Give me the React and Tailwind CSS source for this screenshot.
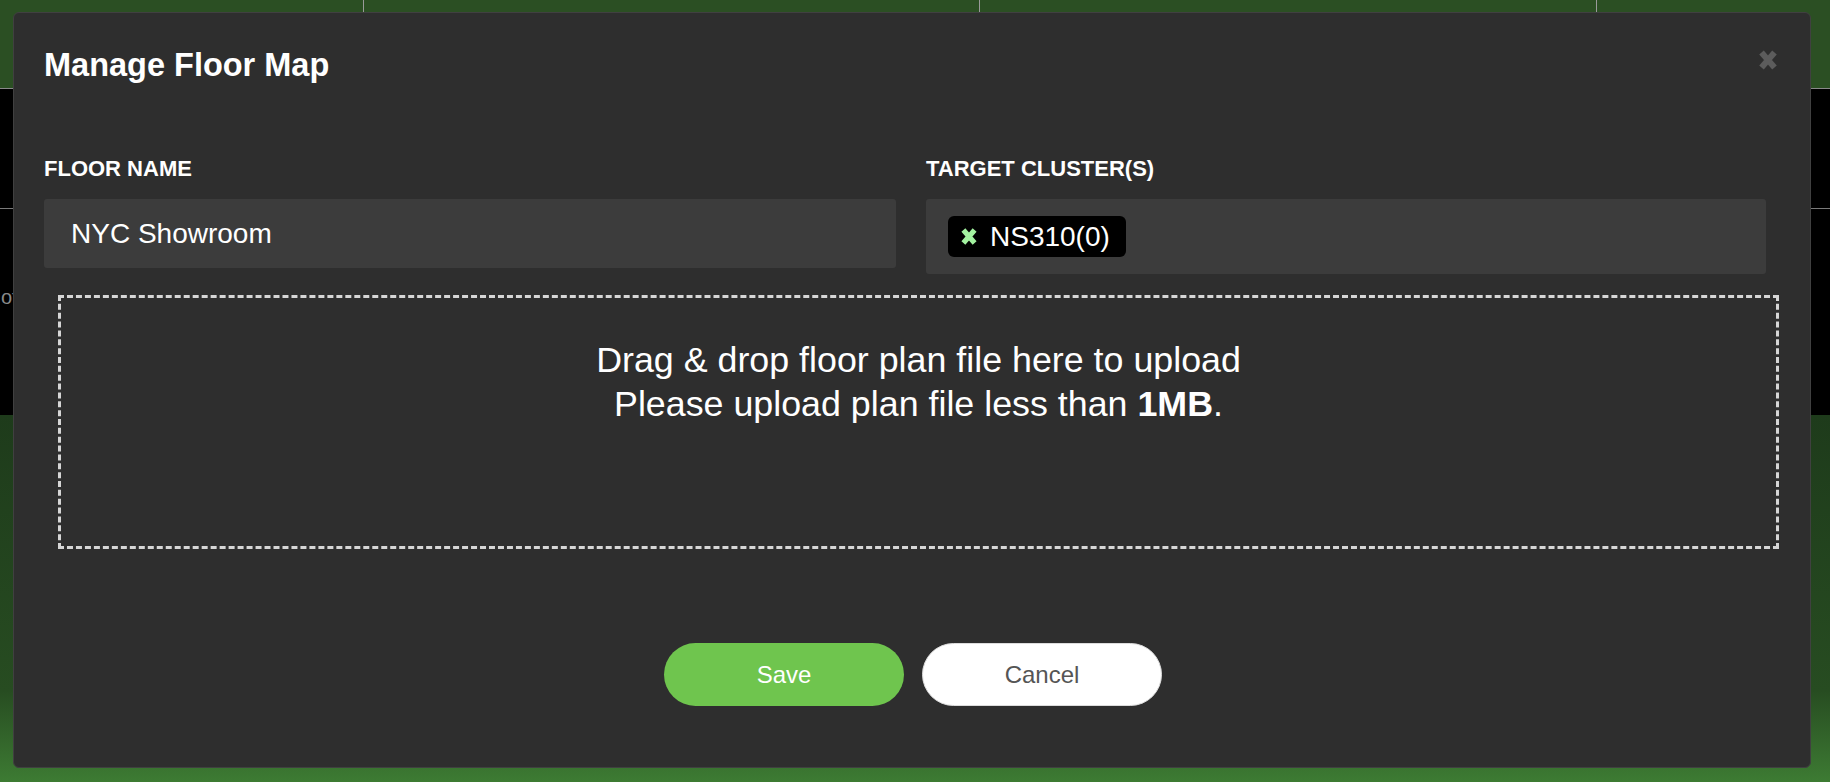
import React from "react";

function HeavyX({ className, color, sw }) {
  return (
    <svg viewBox="0 0 20 22" className={className} fill="none">
      <path d="M3.5 3.5 L16.5 18.5 M16.5 3.5 L3.5 18.5" stroke={color} strokeWidth={sw} strokeLinecap="butt" />
    </svg>
  );
}

export default function App() {
  return (
    <div className="relative w-[1830px] h-[782px] overflow-hidden bg-black font-['Liberation_Sans',Arial,sans-serif]">
      {/* page behind the dialog */}
      <div className="flex flex-col h-full">
        <div className="h-[88px] bg-[#2b4f23] flex">
          <div className="w-[364px] border-r border-[#9a9a9a]" />
          <div className="w-[616px] border-r border-[#9a9a9a]" />
          <div className="w-[617px] border-r border-[#9a9a9a]" />
          <div className="flex-1" />
        </div>
        <div className="h-px bg-[#8a8a8a]" />
        <div className="h-[326px] bg-black flex flex-col">
          <div className="h-[120px] border-b border-[#7a7a7a]" />
          <div className="pt-[76px] pl-[1px] text-[20px] text-[#8a8a8a] leading-[24px]">ot</div>
        </div>
        <div className="flex-1 bg-[linear-gradient(to_bottom,#1e3b1b,#274c21_75%,#3d7b33)]" />
      </div>

      {/* dialog */}
      <div className="absolute left-[13px] top-[12px] w-[1798px] h-[756px] rounded-[6px] bg-[#2e2e2e] border border-[#404040]">
        <button className="absolute right-[32px] top-[36px] w-[20px] h-[22px]">
          <HeavyX className="w-[20px] h-[22px]" color="#5c5c5c" sw={6} />
        </button>

        <div className="pl-[30px] pt-[33px]">
          <h2 className="text-[32.5px] leading-[38px] font-bold text-white">Manage Floor Map</h2>

          <div className="mt-[72px] grid grid-cols-[852px_840px] gap-x-[30px] items-start">
            <div className="flex flex-col">
              <label className="text-[22px] leading-[26px] font-bold text-white">FLOOR NAME</label>
              <div className="mt-[17px] h-[69px] rounded-[3px] bg-[#3c3c3c] flex items-center pl-[27px] text-[28px] text-white">
                NYC Showroom
              </div>
            </div>
            <div className="flex flex-col">
              <label className="text-[22px] leading-[26px] font-bold text-white">TARGET CLUSTER(S)</label>
              <div className="mt-[17px] h-[75px] rounded-[3px] bg-[#3c3c3c] flex items-center pl-[22px]">
                <span className="h-[41px] rounded-[6px] bg-black flex items-center pl-[12px] pr-[16px]">
                  <HeavyX className="w-[18px] h-[19px]" color="#a3f2a0" sw={6} />
                  <span className="ml-[12px] text-[28px] text-white leading-none">NS310(0)</span>
                </span>
              </div>
            </div>
          </div>
        </div>

        <div className="mt-[21px] ml-[44px] w-[1721px] h-[254px] border-[3px] border-dashed border-[#d6d6d6] pt-[40px] text-center text-white text-[35.8px] leading-[44px]">
          <div>Drag &amp; drop floor plan file here to upload</div>
          <div>
            Please upload plan file less than <span className="font-bold">1MB</span>.
          </div>
        </div>

        <div className="mt-[94px] flex justify-center gap-[18px] pl-[2px]">
          <button className="w-[240px] h-[63px] rounded-full bg-[#6fc54e] text-white text-[24px]">Save</button>
          <button className="w-[240px] h-[63px] rounded-full bg-white border border-[#dcdcdc] text-[#555555] text-[24px]">
            Cancel
          </button>
        </div>
      </div>
    </div>
  );
}
